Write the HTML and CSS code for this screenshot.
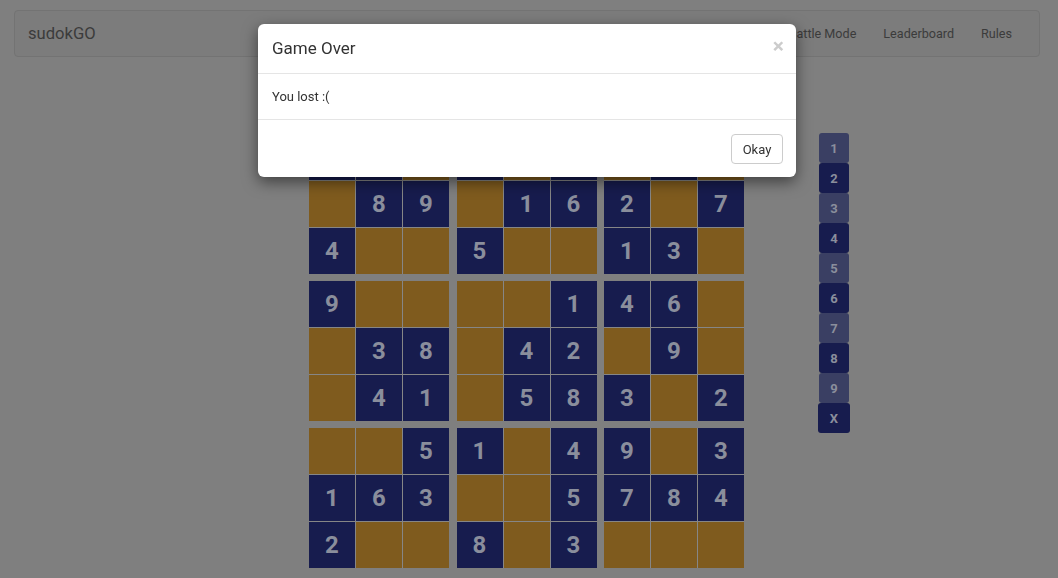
FILE: index.html
```html
<!DOCTYPE html>
<html lang="en">
<head>
<meta charset="utf-8">
<title>sudokGO</title>
<link rel="stylesheet" href="styles.css">
</head>
<body>
<nav class="navbar">
  <a class="brand">sudokGO</a>
  <ul class="nav">
    <li>Single Player</li>
    <li>Battle Mode</li>
    <li>Leaderboard</li>
    <li>Rules</li>
  </ul>
</nav>

<main class="game">
  <div class="board">
    <div class="block">
      <div class="cell n">5</div><div class="cell n">7</div><div class="cell e"></div>
      <div class="cell e"></div><div class="cell n">8</div><div class="cell n">9</div>
      <div class="cell n">4</div><div class="cell e"></div><div class="cell e"></div>
    </div>
    <div class="block">
      <div class="cell n">3</div><div class="cell e"></div><div class="cell n">9</div>
      <div class="cell e"></div><div class="cell n">1</div><div class="cell n">6</div>
      <div class="cell n">5</div><div class="cell e"></div><div class="cell e"></div>
    </div>
    <div class="block">
      <div class="cell e"></div><div class="cell n">5</div><div class="cell e"></div>
      <div class="cell n">2</div><div class="cell e"></div><div class="cell n">7</div>
      <div class="cell n">1</div><div class="cell n">3</div><div class="cell e"></div>
    </div>

    <div class="block">
      <div class="cell n">9</div><div class="cell e"></div><div class="cell e"></div>
      <div class="cell e"></div><div class="cell n">3</div><div class="cell n">8</div>
      <div class="cell e"></div><div class="cell n">4</div><div class="cell n">1</div>
    </div>
    <div class="block">
      <div class="cell e"></div><div class="cell e"></div><div class="cell n">1</div>
      <div class="cell e"></div><div class="cell n">4</div><div class="cell n">2</div>
      <div class="cell e"></div><div class="cell n">5</div><div class="cell n">8</div>
    </div>
    <div class="block">
      <div class="cell n">4</div><div class="cell n">6</div><div class="cell e"></div>
      <div class="cell e"></div><div class="cell n">9</div><div class="cell e"></div>
      <div class="cell n">3</div><div class="cell e"></div><div class="cell n">2</div>
    </div>

    <div class="block">
      <div class="cell e"></div><div class="cell e"></div><div class="cell n">5</div>
      <div class="cell n">1</div><div class="cell n">6</div><div class="cell n">3</div>
      <div class="cell n">2</div><div class="cell e"></div><div class="cell e"></div>
    </div>
    <div class="block">
      <div class="cell n">1</div><div class="cell e"></div><div class="cell n">4</div>
      <div class="cell e"></div><div class="cell e"></div><div class="cell n">5</div>
      <div class="cell n">8</div><div class="cell e"></div><div class="cell n">3</div>
    </div>
    <div class="block">
      <div class="cell n">9</div><div class="cell e"></div><div class="cell n">3</div>
      <div class="cell n">7</div><div class="cell n">8</div><div class="cell n">4</div>
      <div class="cell e"></div><div class="cell e"></div><div class="cell e"></div>
    </div>
  </div>

  <div class="picker">
    <button class="pick light">1</button>
    <button class="pick dark">2</button>
    <button class="pick light">3</button>
    <button class="pick dark">4</button>
    <button class="pick light">5</button>
    <button class="pick dark">6</button>
    <button class="pick light">7</button>
    <button class="pick dark">8</button>
    <button class="pick light">9</button>
    <button class="pick dark clear">X</button>
  </div>
</main>

<div class="backdrop"></div>
<div class="modal" role="dialog">
  <div class="modal-header">
    <h4 class="modal-title">Game Over</h4>
    <span class="close">&times;</span>
  </div>
  <div class="modal-body">You lost :(</div>
  <div class="modal-footer">
    <button class="btn">Okay</button>
  </div>
</div>
</body>
</html>
```

FILE: styles.css
```css
* { box-sizing: border-box; }

html, body {
  margin: 0;
  padding: 0;
  background: #7f7f7f;
  font-family: Roboto, "Liberation Sans", sans-serif;
  overflow: hidden;
  height: 578px;
}

.navbar {
  margin: 10px 18px 0 14px;
  height: 47px;
  border: 1px solid #737373;
  border-radius: 4px;
  background: #7c7c7c;
  display: flex;
  align-items: center;
  justify-content: space-between;
  padding: 0 27px 0 13px;
}

.brand {
  font-size: 16.6px;
  color: #3b3b3b;
}

.nav {
  list-style: none;
  margin: 0;
  padding: 0;
  display: flex;
  gap: 27px;
  font-size: 12.6px;
  color: #3b3b3b;
}

.game {
  display: flex;
  align-items: flex-start;
  padding: 77px 0 0 309px;
}

.board {
  display: grid;
  grid-template-columns: repeat(3, 140px);
  grid-template-rows: repeat(3, 140px);
  column-gap: 7.5px;
  row-gap: 7px;
}

.block {
  display: grid;
  grid-template-columns: repeat(3, 46px);
  grid-template-rows: repeat(3, 46px);
  gap: 1px;
  background: #868686;
}

.cell {
  display: flex;
  align-items: center;
  justify-content: center;
  font-size: 24px;
  font-weight: 700;
  color: #8a8e9c;
}

.cell.n { background: #171c4e; }
.cell.e { background: #7f5b1e; }

.picker {
  margin-left: 74px;
  margin-top: -1px;
  display: flex;
  flex-direction: column;
  align-items: center;
}

.pick {
  width: 30px;
  height: 30px;
  border: none;
  padding: 0;
  margin: 0;
  border-radius: 3px;
  font-family: Roboto, "Liberation Sans", sans-serif;
  font-size: 13px;
  font-weight: 700;
  color: #8a8e9c;
}

.pick.light { background: #3a3f63; }
.pick.dark { background: #171c4e; }
.pick.clear { width: 32px; }

.backdrop {
  position: fixed;
  inset: 0;
  background: transparent;
}

.modal {
  position: fixed;
  top: 24px;
  left: 258px;
  width: 538px;
  background: #fff;
  border-radius: 6px;
  box-shadow: 0 5px 15px rgba(0, 0, 0, 0.5);
  color: #333;
}

.modal-header {
  padding: 14px 14px 15px;
  border-bottom: 1px solid #e5e5e5;
  display: flex;
  align-items: center;
  justify-content: space-between;
}

.modal-title {
  margin: 0;
  font-size: 17px;
  font-weight: 400;
  line-height: 20px;
}

.close {
  font-size: 21px;
  font-weight: 700;
  line-height: 20px;
  color: #cccccc;
  margin-right: -2px;
  margin-top: -5px;
}

.modal-body {
  padding: 14px;
  font-size: 13px;
  line-height: 17px;
}

.modal-footer {
  padding: 14px 13px 13px 14px;
  border-top: 1px solid #e5e5e5;
  display: flex;
  justify-content: flex-end;
}

.btn {
  height: 30px;
  width: 52px;
  padding: 0;
  font-family: Roboto, "Liberation Sans", sans-serif;
  font-size: 13px;
  color: #333;
  background: #fff;
  border: 1px solid #ccc;
  border-radius: 4px;
}
```
